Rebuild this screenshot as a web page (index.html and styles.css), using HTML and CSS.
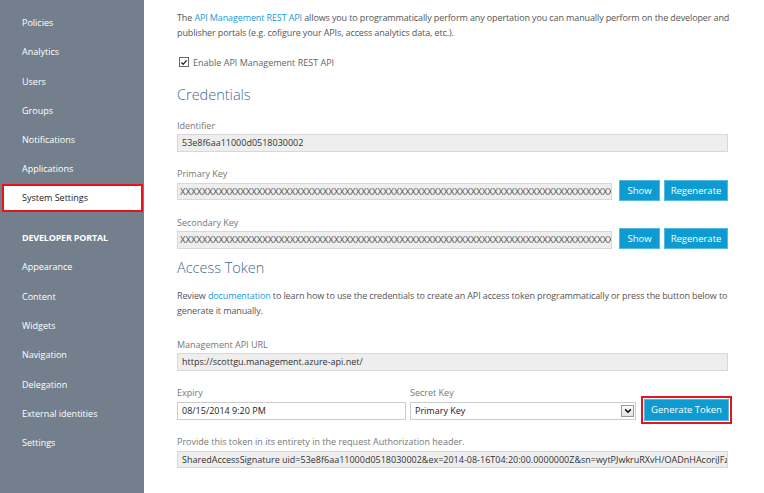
FILE: index.html
```html
<!DOCTYPE html>
<html lang="en">
<head>
<meta charset="utf-8">
<title>System Settings</title>
<link rel="stylesheet" href="styles.css">
</head>
<body>
<div class="layout">
  <nav class="sidebar">
    <a class="nav-item">Policies</a>
    <a class="nav-item">Analytics</a>
    <a class="nav-item">Users</a>
    <a class="nav-item">Groups</a>
    <a class="nav-item">Notifications</a>
    <a class="nav-item">Applications</a>
    <a class="nav-item active">System Settings</a>
    <div class="nav-header">DEVELOPER PORTAL</div>
    <a class="nav-item">Appearance</a>
    <a class="nav-item">Content</a>
    <a class="nav-item">Widgets</a>
    <a class="nav-item">Navigation</a>
    <a class="nav-item">Delegation</a>
    <a class="nav-item">External identities</a>
    <a class="nav-item">Settings</a>
  </nav>

  <main class="content">
    <p class="intro">The <a class="link">API Management REST API</a> allows you to programmatically perform any opertation you can manually perform on the developer and publisher portals (e.g. cofigure your APIs, access analytics data, etc.).</p>

    <label class="check">
      <span class="checkbox">
        <svg viewBox="0 0 10 10" width="9" height="9"><path d="M1.8 5 L4 7.3 L8.3 2.3" fill="none" stroke="#222" stroke-width="1.7"/></svg>
      </span>
      Enable API Management REST API
    </label>

    <h2 class="heading">Credentials</h2>

    <div class="field first">
      <div class="label">Identifier</div>
      <div class="input readonly">53e8f6aa11000d0518030002</div>
    </div>

    <div class="field">
      <div class="label">Primary Key</div>
      <div class="row">
        <div class="input readonly grow">XXXXXXXXXXXXXXXXXXXXXXXXXXXXXXXXXXXXXXXXXXXXXXXXXXXXXXXXXXXXXXXXXXXXXXXXXXXXXXXXXXXXXXXXXXXXXXXXX</div>
        <button class="btn btn-show">Show</button>
        <button class="btn btn-regen">Regenerate</button>
      </div>
    </div>

    <div class="field">
      <div class="label">Secondary Key</div>
      <div class="row">
        <div class="input readonly grow">XXXXXXXXXXXXXXXXXXXXXXXXXXXXXXXXXXXXXXXXXXXXXXXXXXXXXXXXXXXXXXXXXXXXXXXXXXXXXXXXXXXXXXXXXXXXXXXXX</div>
        <button class="btn btn-show">Show</button>
        <button class="btn btn-regen">Regenerate</button>
      </div>
    </div>

    <h2 class="heading heading-token">Access Token</h2>

    <p class="intro">Review <a class="link">documentation</a> to learn how to use the credentials to create an API access token programmatically or press the button below to generate it manually.</p>

    <div class="field field-url">
      <div class="label">Management API URL</div>
      <div class="input readonly">https://scottgu.management.azure-api.net/</div>
    </div>

    <div class="field field-grid">
      <div class="col-expiry">
        <div class="label">Expiry</div>
        <div class="input editable">08/15/2014 9:20 PM</div>
      </div>
      <div class="col-secret">
        <div class="label">Secret Key</div>
        <div class="input editable select">
          <span>Primary Key</span>
          <span class="select-arrow">
            <svg viewBox="0 0 10 10" width="8" height="8"><path d="M1.5 3 L5 6.5 L8.5 3" fill="none" stroke="#111" stroke-width="2"/></svg>
          </span>
        </div>
      </div>
      <div class="col-generate">
        <span class="highlight">
          <button class="btn btn-generate">Generate Token</button>
        </span>
      </div>
    </div>

    <div class="field">
      <div class="label">Provide this token in its entirety in the request Authorization header.</div>
      <div class="input readonly">SharedAccessSignature uid=53e8f6aa11000d0518030002&amp;ex=2014-08-16T04:20:00.0000000Z&amp;sn=wytPJwkruRXvH/OADnHAcoriJFzOq9kMcA3CZz0w6Dgf</div>
    </div>
  </main>
</div>
</body>
</html>
```

FILE: styles.css
```css
* { box-sizing: border-box; }

html, body {
  margin: 0;
  padding: 0;
  background: #fff;
}

body {
  font-family: "Open Sans", "Noto Sans", sans-serif;
  font-size: 9px;
  color: #555;
  width: 764px;
  height: 493px;
  overflow: hidden;
}

.layout {
  display: flex;
  height: 493px;
}

/* left navigation */
.sidebar {
  width: 144px;
  flex: none;
  background: #737f8d;
  display: flex;
  flex-direction: column;
  padding-top: 8px;
}

.nav-item,
.nav-header {
  display: block;
  height: 29.3px;
  line-height: 29.3px;
  padding-left: 22px;
  color: #fff;
  font-size: 9px;
  white-space: nowrap;
}

.nav-header {
  font-weight: 700;
  margin-top: 10px;
  letter-spacing: -0.2px;
}

.nav-item.active {
  background: #fff;
  color: #222;
  margin-left: 2px;
  padding-left: 18px;
  width: 141px;
  height: 28px;
  line-height: 24px;
  margin-top: 0.5px;
  margin-bottom: 0.8px;
  border: 2px solid #e8131b;
}

/* main panel */
.content {
  flex: none;
  width: 620px;
  padding: 10px 36px 0 33px;
}

.intro {
  margin: 0 -10px 0 0;
  line-height: 15px;
  letter-spacing: -0.12px;
}

.link {
  color: #1b9ad6;
  text-decoration: none;
}

.check {
  display: flex;
  align-items: center;
  gap: 4px;
  margin: 16px 0 0 2px;
  height: 12px;
  color: #666;
}

.checkbox {
  width: 10px;
  height: 10px;
  border: 1px solid #666;
  display: flex;
  align-items: center;
  justify-content: center;
  background: #fff;
}

.checkbox svg { display: block; }

.heading {
  margin: 16px 0 0;
  font-size: 14.5px;
  font-weight: 300;
  color: #3f6892;
  line-height: 22px;
}

.heading-token {
  margin-top: 8px;
  margin-bottom: 9px;
}

.field {
  margin-top: 14.5px;
}

.field.first { margin-top: 11.5px; }

.label {
  line-height: 15px;
  margin-bottom: 1.5px;
  color: #777;
  white-space: nowrap;
}

.input {
  height: 17.5px;
  line-height: 15.5px;
  padding: 0 4px;
  font-size: 9px;
  color: #333;
  white-space: nowrap;
  overflow: hidden;
}

.readonly {
  background: #eee;
  border: 1px solid #d8d8d8;
}

.editable {
  background: #fff;
  border: 1px solid #ccc;
  height: 18px;
  line-height: 16px;
  color: #222;
}

.row {
  display: flex;
  align-items: flex-start;
  gap: 4px;
}

.grow {
  flex: 1;
  min-width: 0;
  margin-right: 3px;
  padding-left: 2px;
  color: #555;
  font-size: 9.5px;
}

.btn {
  border: 1px solid #54b8e2;
  background: #0e9bd1;
  color: #fff;
  font-family: inherit;
  font-size: 9.5px;
  height: 21px;
  padding: 0;
  cursor: pointer;
}

.row .btn {
  margin-top: -3px;
  margin-bottom: -1px;
}

.btn-show { width: 41px; }
.btn-regen { width: 64px; }

.field-url { margin-top: 19px; }

/* expiry / secret key / generate row */
.field-grid {
  display: flex;
  align-items: flex-end;
}

.col-expiry { width: 229px; margin-right: 4px; }

.col-secret { width: 226px; margin-right: 5px; }

.select {
  display: flex;
  align-items: center;
  justify-content: space-between;
  padding-right: 1px;
}

.select-arrow {
  width: 13px;
  height: 12px;
  border: 1px solid #999;
  background: linear-gradient(#fdfdfd, #e3e3e3);
  display: flex;
  align-items: center;
  justify-content: center;
}

.select-arrow svg { display: block; }

.col-generate {
  margin-bottom: -4px;
  margin-right: -5px;
}

.highlight {
  display: block;
  border: 2px solid #e8131b;
  padding: 1px;
}

.btn-generate {
  width: 85px;
  height: 22px;
  display: block;
  font-size: 9.5px;
}
```
